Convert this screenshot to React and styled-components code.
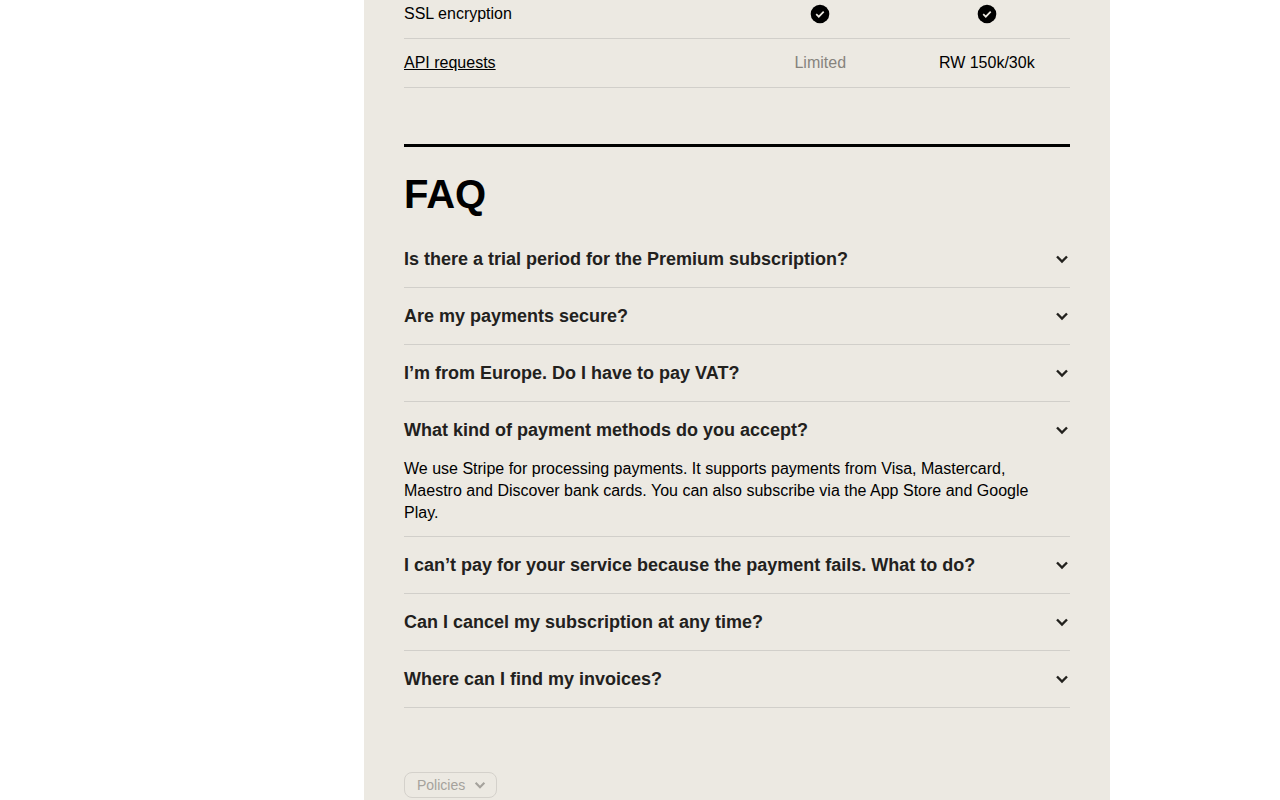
import React, {useState} from 'react';
import styled, {createGlobalStyle} from 'styled-components';

const GlobalStyle = createGlobalStyle`
	*, *::before, *::after {
		box-sizing: border-box;
	}

	body {
		margin: 0;
		background: #fff;
		color: #000;
		font-family: "Liberation Sans", Arial, sans-serif;
		font-size: 16px;
		line-height: 22px;
	}

	button {
		font-family: inherit;
	}
`

const Page = styled.div`
	min-height: 100vh;
	display: grid;
	grid-template-columns: minmax(0, 364fr) minmax(0, 746fr) minmax(0, 170fr);
`

const Panel = styled.main`
	grid-column: 2;
	padding: 0 40px 2px;
	background: #ece9e2;
`

const Table = styled.table`
	width: 100%;
	table-layout: fixed;
	border-collapse: separate;
	border-spacing: 0;
`

const Row = styled.tr`
	& > * {
		height: ${({$first})=> $first ? '39px' : '49px'};
		padding: ${({$first})=> $first ? '3px 0 13px' : '13px 0'};
		border-bottom: 1px solid #d1cfca;
		vertical-align: top;
	}
`

const Feature = styled.th`
	width: 50%;
	font-weight: normal;
	text-align: left;
`

const Value = styled.td`
	width: 25%;
	color: ${({$muted})=> $muted ? '#86837d' : '#000'};
	text-align: center;
`

const FeatureLink = styled.a`
	color: inherit;
	text-decoration: underline;
	text-underline-offset: 1px;
`

const CheckSvg = styled.svg`
	display: block;
	margin: 1px auto 0;
`

const Faq = styled.section`
	margin-top: 56px;
	padding-top: 22px;
	border-top: 3px solid #000;
`

const Title = styled.h2`
	margin: 0 0 12px;
	font-size: 40px;
	line-height: 50px;
	font-weight: bold;
`

const Item = styled.div`
	border-bottom: 1px solid #d1cfca;
`

const ItemTitle = styled.h3`
	margin: 0;
`

const Question = styled.button`
	width: 100%;
	padding: 17px 0;
	display: flex;
	justify-content: space-between;
	align-items: center;
	border: 0;
	background: transparent;
	color: #22211d;
	font-size: 18px;
	line-height: 22px;
	font-weight: bold;
	text-align: left;
	cursor: pointer;
`

const Answer = styled.p`
	margin: 0;
	padding: 0 16px 12px 0;
`

const Policies = styled.button`
	height: 26px;
	margin-top: 64px;
	padding: 0 9px 0 12px;
	display: flex;
	align-items: center;
	gap: 8px;
	border: 1px solid #d4d1cb;
	border-radius: 8px;
	background: transparent;
	color: #a5a29c;
	font-size: 14px;
	line-height: 20px;
	cursor: pointer;
`

const faqs = [
	{question: 'Is there a trial period for the Premium subscription?', answer: ''},
	{question: 'Are my payments secure?', answer: ''},
	{question: 'I’m from Europe. Do I have to pay VAT?', answer: ''},
	{
		question: 'What kind of payment methods do you accept?',
		answer: 'We use Stripe for processing payments. It supports payments from Visa, Mastercard, Maestro and Discover bank cards. You can also subscribe via the App Store and Google Play.',
	},
	{question: 'I can’t pay for your service because the payment fails. What to do?', answer: ''},
	{question: 'Can I cancel my subscription at any time?', answer: ''},
	{question: 'Where can I find my invoices?', answer: ''},
];


function Check()
{
	return <CheckSvg width="20" height="20" viewBox="0 0 20 20" role="img" aria-label="Included">
		<circle cx="10" cy="10" r="9.3" fill="#000" />
		<path d="M6.2 10.2 8.8 12.7 13.7 7.6" fill="none" stroke="#ece9e2" strokeWidth="1.7" />
	</CheckSvg>
}


function Chevron({size = 16})
{
	return <svg width={size} height={size} viewBox="0 0 16 16" aria-hidden="true">
		<path d="M3 5.5 8 10.5 13 5.5" fill="none" stroke="currentColor" strokeWidth="2.4" />
	</svg>
}


function FaqItem({question, answer, open, onToggle})
{
	return <Item>
		<ItemTitle>
			<Question type="button" aria-expanded={open} onClick={onToggle}>
				{question}
				<Chevron />
			</Question>
		</ItemTitle>
		{open && answer !== '' && <Answer>{answer}</Answer>}
	</Item>
}


function App()
{
	const [opened, setOpened] = useState(3);

	return <Page>
		<GlobalStyle />
		<Panel>
			<Table>
				<tbody>
					<Row $first>
						<Feature scope="row">SSL encryption</Feature>
						<Value><Check /></Value>
						<Value><Check /></Value>
					</Row>
					<Row>
						<Feature scope="row"><FeatureLink href="#api">API requests</FeatureLink></Feature>
						<Value $muted>Limited</Value>
						<Value>RW 150k/30k</Value>
					</Row>
				</tbody>
			</Table>
			<Faq>
				<Title>FAQ</Title>
				{faqs.map( (faq, i)=>
					<FaqItem {...faq}
						key={faq.question}
						open={opened === i}
						onToggle={()=>setOpened(opened === i ? -1 : i)}
					/>
				)}
			</Faq>
			<Policies type="button">
				Policies
				<Chevron size={14} />
			</Policies>
		</Panel>
	</Page>
}


export default App;
